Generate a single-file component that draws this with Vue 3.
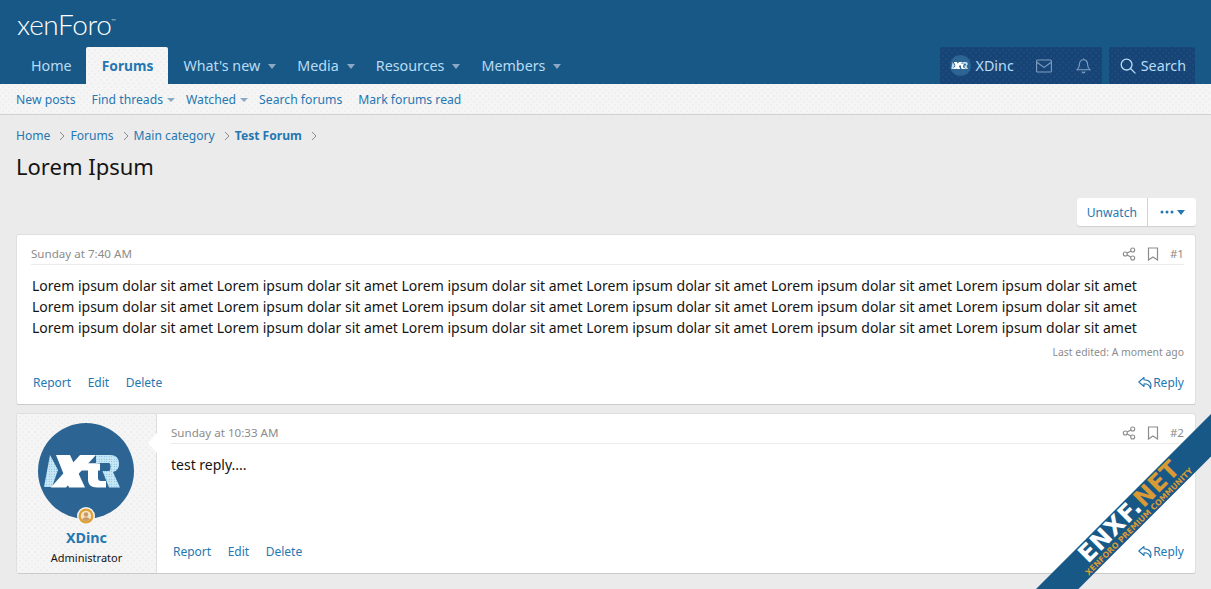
<template>
  <div class="page">
    <header class="top">
      <div class="logo-row">
        <span class="logo">xenForo<sup>™</sup></span>
      </div>
      <nav class="nav">
        <div class="tabs">
          <a
            v-for="tab in tabs"
            :key="tab.label"
            class="tab"
            :class="{ 'tab--on': tab.active, 'tab--menu': tab.menu }"
          >
            {{ tab.label }}<i v-if="tab.menu" class="caret caret--nav"></i>
          </a>
        </div>
        <div class="user-links">
          <div class="nav-group">
            <a class="user">
              <svg class="mini-avatar" viewBox="0 0 96 96"><use href="#xtr-logo" /></svg>
              XDinc
            </a>
            <a class="nav-icon">
              <svg width="16" height="14" viewBox="0 0 16 14" fill="none" stroke="currentColor" stroke-width="1.1"><rect x="0.6" y="1" width="14.8" height="12" rx="1" /><path d="M0.8 3.2 8 8.4l7.2-5.2" /></svg>
            </a>
            <a class="nav-icon">
              <svg width="15" height="16" viewBox="0 0 15 16" fill="none" stroke="currentColor" stroke-width="1.1"><path d="M7.5 1.8c-2.6 0-4 1.9-4 4.2 0 3.1-.9 4.3-2.3 5.7h12.6C12.4 10.3 11.5 9.1 11.5 6c0-2.3-1.4-4.2-4-4.2Z" /><path d="M7.5.4v1.4M5.9 13.3c.2 1 .8 1.6 1.6 1.6s1.4-.6 1.6-1.6" /></svg>
            </a>
          </div>
          <a class="nav-group search">
            <svg width="16" height="16" viewBox="0 0 16 16" fill="none" stroke="currentColor" stroke-width="1.3"><circle cx="6.6" cy="6.6" r="5.4" /><path d="m10.5 10.5 4.9 4.9" /></svg>
            Search
          </a>
        </div>
      </nav>
    </header>

    <div class="subnav">
      <a v-for="item in subLinks" :key="item.label" class="sub-link" :class="{ 'sub-link--menu': item.menu }">
        {{ item.label }}<i v-if="item.menu" class="caret caret--sub"></i>
      </a>
    </div>

    <main class="content">
      <ul class="crumbs">
        <li v-for="crumb in crumbs" :key="crumb.label" :class="{ strong: crumb.strong }">
          {{ crumb.label }}
          <svg width="6" height="10" viewBox="0 0 6 10" fill="none" stroke="#8c8c8c" stroke-width="1"><path d="m1 1 4 4-4 4" /></svg>
        </li>
      </ul>
      <h1>Lorem Ipsum</h1>

      <div class="actions">
        <div class="btn-group">
          <a class="btn">Unwatch</a>
          <a class="btn btn--more">
            <svg width="14" height="4" viewBox="0 0 14 4" fill="#2577b1"><circle cx="2" cy="2" r="1.5" /><circle cx="7" cy="2" r="1.5" /><circle cx="12" cy="2" r="1.5" /></svg>
            <i class="caret caret--btn"></i>
          </a>
        </div>
      </div>

      <article class="post">
        <div class="post-main">
          <div class="post-head">
            <span>Sunday at 7:40 AM</span>
            <div class="post-tools">
              <svg v-bind="toolIcon"><use href="#share-icon" /></svg>
              <svg v-bind="toolIcon"><use href="#mark-icon" /></svg>
              <span>#1</span>
            </div>
          </div>
          <div class="post-body post-body--first">{{ lorem }}</div>
          <div class="edited">Last edited: A moment ago</div>
          <div class="post-foot">
            <div class="foot-links"><a>Report</a><a>Edit</a><a>Delete</a></div>
            <a class="reply"><svg v-bind="toolIcon"><use href="#reply-icon" /></svg>Reply</a>
          </div>
        </div>
      </article>

      <article class="post post--user">
        <aside class="author">
          <div class="avatar-wrap">
            <svg class="avatar" viewBox="0 0 96 96"><use href="#xtr-logo" /></svg>
            <span class="badge">
              <svg width="16" height="16" viewBox="0 0 16 16"><circle cx="8" cy="8" r="7.5" fill="#e0a02f" /><circle cx="8" cy="8" r="5.2" fill="#f3e4cb" /><circle cx="8" cy="6.5" r="2.2" fill="#c99a63" /><path d="M4 12c.8-2 2.2-2.7 4-2.7s3.2.7 4 2.7c-2.2 1.3-5.8 1.3-8 0Z" fill="#c99a63" /></svg>
            </span>
          </div>
          <div class="name">XDinc</div>
          <div class="role">Administrator</div>
        </aside>
        <div class="post-main">
          <div class="post-head">
            <span>Sunday at 10:33 AM</span>
            <div class="post-tools">
              <svg v-bind="toolIcon"><use href="#share-icon" /></svg>
              <svg v-bind="toolIcon"><use href="#mark-icon" /></svg>
              <span>#2</span>
            </div>
          </div>
          <div class="post-body post-body--grow">test reply....</div>
          <div class="post-foot">
            <div class="foot-links"><a>Report</a><a>Edit</a><a>Delete</a></div>
            <a class="reply"><svg v-bind="toolIcon"><use href="#reply-icon" /></svg>Reply</a>
          </div>
        </div>
      </article>
    </main>

    <div class="ribbon">
      <div class="ribbon-title">ENXF.<b>NET</b></div>
      <div class="ribbon-sub">XENFORO PREMIUM COMMUNITY</div>
    </div>

    <svg class="defs" width="0" height="0">
      <defs>
        <pattern id="dots" width="2.5" height="2.5" patternUnits="userSpaceOnUse">
          <rect width="2.5" height="2.5" fill="#c9e9f7" />
          <circle cx="1.2" cy="1.2" r="0.55" fill="#6aaed6" />
        </pattern>
        <g id="xtr-logo">
          <circle cx="48" cy="48" r="48" fill="#2c6594" />
          <path d="M6 64 12 32l8 15-6 17Z" fill="url(#dots)" />
          <path d="M58 32H72C79 32 81 36 81 41C81 45 79 48 75 49L82 64.5H71L64.5 48H71C73 48 73 40 71 40H58Z" fill="url(#dots)" />
          <path d="M18 32h14l15 32.5H31Z" fill="#fff" />
          <path d="M12.7 64.5H28L58 32H42Z" fill="#fff" />
          <path d="M34 40.5h28v7H34Z" fill="#fff" />
          <path d="M50 40.5h10V55c0 2 1 3 3 3h5v6.5H59c-6 0-9-3-9-8Z" fill="#fff" />
        </g>
        <g id="share-icon" fill="none" stroke="#8c8c8c" stroke-width="1.1">
          <circle cx="3.3" cy="7" r="2" /><circle cx="10.7" cy="3" r="2" /><circle cx="10.7" cy="11" r="2" />
          <path d="M5.1 6 8.9 4M5.1 8l3.8 2" />
        </g>
        <path id="mark-icon" d="M2.5 1h9v12L7 10l-4.5 3Z" fill="none" stroke="#8c8c8c" stroke-width="1.2" />
        <path id="reply-icon" d="M6 1.5 .8 6 6 10.5V7.8c3.5 0 5.5 1 6.5 4.7 1.5-5-.5-8.5-6.5-8.7Z" fill="none" stroke="#2577b1" stroke-width="1.1" stroke-linejoin="round" />
      </defs>
    </svg>
  </div>
</template>

<script setup>
const tabs = [
  { label: 'Home' },
  { label: 'Forums', active: true },
  { label: "What's new", menu: true },
  { label: 'Media', menu: true },
  { label: 'Resources', menu: true },
  { label: 'Members', menu: true }
]

const subLinks = [
  { label: 'New posts' },
  { label: 'Find threads', menu: true },
  { label: 'Watched', menu: true },
  { label: 'Search forums' },
  { label: 'Mark forums read' }
]

const crumbs = [
  { label: 'Home' },
  { label: 'Forums' },
  { label: 'Main category' },
  { label: 'Test Forum', strong: true }
]

const toolIcon = { width: 14, height: 14, viewBox: '0 0 14 14' }

const lorem = Array(18).fill('Lorem ipsum dolar sit amet').join(' ')
</script>

<style>
html,
body {
  margin: 0;
  background: #ebebeb;
}
</style>

<style scoped>
.page {
  position: relative;
  width: 1211px;
  height: 589px;
  overflow: hidden;
  background: #ebebeb;
  color: #141414;
  font-family: "Noto Sans", "Open Sans", sans-serif;
  font-size: 13px;
}

a {
  color: #2577b1;
  text-decoration: none;
}

.defs {
  position: absolute;
}

.top {
  background: #185886;
}

.logo-row {
  height: 47px;
  padding-left: 17px;
  box-sizing: border-box;
}

.logo {
  display: block;
  padding-top: 7px;
  color: #fff;
  font-family: Lato, sans-serif;
  font-weight: 300;
  font-size: 28px;
  line-height: 34px;
  letter-spacing: -0.4px;
}

.logo sup {
  font-size: 6px;
  vertical-align: 12px;
  line-height: 0;
}

.nav {
  display: flex;
  justify-content: space-between;
  height: 37px;
  padding: 0 16px;
}

.tabs {
  display: flex;
}

.tab {
  display: flex;
  align-items: center;
  padding: 0 15px;
  color: #b9dcf5;
  font-size: 14.3px;
  border-radius: 2px 2px 0 0;
  white-space: nowrap;
}

.tab--menu {
  padding-right: 6px;
}

.tab--on,
.subnav,
.author {
  background-color: #f5f5f5;
  background-image:
    radial-gradient(circle, rgba(0, 0, 0, 0.025) 0.7px, transparent 0.9px),
    radial-gradient(circle, rgba(0, 0, 0, 0.025) 0.7px, transparent 0.9px);
  background-size: 6px 6px;
  background-position: 0 0, 3px 3px;
}

.tab--on {
  margin-left: -1px;
  padding-left: 16px;
  color: #2577b1;
  font-size: 13.8px;
  font-weight: 700;
}

.caret {
  display: inline-block;
  width: 0;
  height: 0;
  border-left: 4.5px solid transparent;
  border-right: 4.5px solid transparent;
  border-top: 5px solid #8ba8c4;
}

.caret--nav {
  margin: 1px 0 0 8px;
}

.caret--sub {
  margin: 0 0 1px 4px;
  border-left-width: 4px;
  border-right-width: 4px;
  border-top-width: 4px;
  vertical-align: middle;
}

.caret--btn {
  border-top-color: #2577b1;
  margin-left: 3px;
}

.user-links {
  display: flex;
  gap: 7px;
}

.nav-group {
  display: flex;
  align-items: center;
  background-color: #174477;
  background-image:
    radial-gradient(circle, rgba(255, 255, 255, 0.035) 0.7px, transparent 0.9px),
    radial-gradient(circle, rgba(255, 255, 255, 0.035) 0.7px, transparent 0.9px);
  background-size: 6px 6px;
  background-position: 0 0, 3px 3px;
  border-radius: 2px 2px 0 0;
  color: #b9dcf5;
  font-size: 14.3px;
}

.user {
  display: flex;
  align-items: center;
  gap: 5px;
  padding-left: 10px;
  color: #b9dcf5;
}

.mini-avatar {
  width: 21px;
  height: 21px;
}

.nav-icon {
  display: flex;
  color: #7f9ec2;
  margin-left: 22px;
}

.nav-icon:last-child {
  margin-left: 24px;
  margin-right: 11px;
}

.search {
  gap: 5px;
  padding: 0 9px 0 11px;
}

.subnav {
  display: flex;
  align-items: center;
  gap: 16px;
  height: 30px;
  padding-left: 16px;
  border-bottom: 1px solid #d0d0d0;
  font-size: 12.2px;
}

.sub-link {
  white-space: nowrap;
}

.sub-link--menu {
  margin-right: -5px;
}

.content {
  padding: 0 15px 0 16px;
}

.crumbs {
  display: flex;
  gap: 5px;
  margin: 0;
  padding: 12px 0 0;
  list-style: none;
  color: #2577b1;
  font-size: 12.1px;
  line-height: 17px;
}

.crumbs li {
  display: flex;
  align-items: center;
  gap: 9px;
}

.crumbs .strong {
  font-weight: 700;
}

h1 {
  margin: 7px 0 0;
  font-size: 22px;
  font-weight: 400;
  line-height: 30px;
}

.actions {
  display: flex;
  justify-content: flex-end;
  margin-top: 17px;
}

.btn-group {
  display: flex;
  height: 28px;
  background: #fff;
  border-radius: 3px;
  box-shadow: 0 1px 1px #cfcfcf;
  font-size: 12.1px;
}

.btn {
  display: flex;
  align-items: center;
  padding: 0 10px;
}

.btn--more {
  padding: 0 11px 0 12px;
  border-left: 1px solid #d4d4d4;
}

.post {
  display: flex;
  margin-top: 8px;
  background: #fff;
  border: 1px solid #dfdfdf;
  border-bottom-color: #cbcbcb;
  border-radius: 3px;
}

.post-main {
  flex: 1;
  display: flex;
  flex-direction: column;
  min-width: 0;
  padding: 0 11px 0 14px;
}

.post-head {
  display: flex;
  align-items: flex-end;
  justify-content: space-between;
  box-sizing: border-box;
  height: 30px;
  padding-bottom: 2px;
  color: #8c8c8c;
  font-size: 11.6px;
  line-height: 16px;
  border-bottom: 1px solid #ececec;
}

.post-tools {
  display: flex;
  align-items: center;
  gap: 10px;
}

.post-body {
  padding: 10px 20px 0 1px;
  font-size: 14px;
  line-height: 21.2px;
}

.post-body--grow {
  flex: 1;
  padding-left: 0;
}

.edited {
  padding-top: 6.4px;
  text-align: right;
  color: #8c8c8c;
  font-size: 10.4px;
  line-height: 14px;
}

.post-foot {
  display: flex;
  justify-content: space-between;
  align-items: center;
  height: 32px;
  margin-top: 7.5px;
  padding: 0 0 5.5px 2px;
  font-size: 12px;
  line-height: 16px;
}

.foot-links {
  display: flex;
  gap: 16.5px;
}

.reply {
  display: flex;
  align-items: center;
  gap: 1px;
}

.post--user {
  height: 161px;
  box-sizing: border-box;
}

.author {
  width: 140px;
  flex: none;
  box-sizing: border-box;
  position: relative;
  padding-top: 9px;
  border-right: 1px solid #dfdfdf;
  text-align: center;
}

.author::after {
  content: "";
  position: absolute;
  top: 19px;
  right: -1px;
  border-top: 10px solid transparent;
  border-bottom: 10px solid transparent;
  border-right: 9px solid #fff;
}

.avatar-wrap {
  position: relative;
  width: 96px;
  height: 96px;
  margin: 0 0 0 21px;
}

.avatar {
  display: block;
  width: 96px;
  height: 96px;
}

.badge {
  position: absolute;
  left: 39px;
  bottom: -6px;
  width: 18px;
  height: 18px;
  border-radius: 50%;
  background: #f5f5f5;
  display: flex;
  align-items: center;
  justify-content: center;
}

.name {
  margin-top: 9px;
  color: #2577b1;
  font-size: 14.3px;
  font-weight: 700;
  line-height: 20px;
}

.role {
  font-size: 11px;
  line-height: 19px;
}

.ribbon {
  position: absolute;
  left: 1030px;
  top: 595px;
  box-sizing: border-box;
  width: 270px;
  height: 30px;
  padding-right: 12px;
  transform-origin: 0 0;
  transform: rotate(-45deg);
  background: #185886;
  text-align: center;
  white-space: nowrap;
}

.ribbon-title {
  margin-top: 1px;
  font-family: "DejaVu Sans", sans-serif;
  font-size: 24px;
  font-weight: 700;
  line-height: 20px;
  letter-spacing: 0.3px;
  color: #fff;
}

.ribbon-title b {
  color: #d99a35;
}

.ribbon-sub {
  font-family: "DejaVu Sans", sans-serif;
  font-size: 8px;
  font-weight: 700;
  line-height: 9px;
  color: #d99a35;
}
</style>
